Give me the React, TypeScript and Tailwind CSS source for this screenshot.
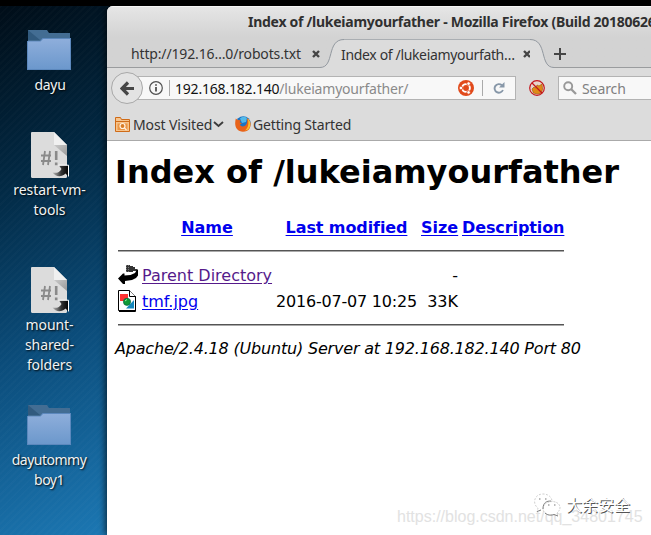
import React from "react";

const UI = "font-['Noto_Sans','Open_Sans',sans-serif]";

function Folder() {
  return (
    <svg width="44" height="40" viewBox="0 0 44 40" className="block shrink-0">
      <defs>
        <linearGradient id="folder" x1="0" y1="0" x2="0" y2="1">
          <stop offset="0" stopColor="#8eaedb" />
          <stop offset="1" stopColor="#6c98cc" />
        </linearGradient>
      </defs>
      <path d="M1 0h19l2 3h21v12H1z" fill="#436d93" />
      <path d="M1 0l12 10H1z" fill="#315a7e" />
      <path d="M0 11h13l2.500-3H44v32H0z" fill="#5c88bd" />
      <path d="M1 11.500h12.500l2.500-2.500H43v30H1z" fill="url(#folder)" />
    </svg>
  );
}

function Script() {
  return (
    <svg width="38" height="46" viewBox="0 0 38 46" className="ml-px block shrink-0">
      <defs>
        <linearGradient id="shade" x1="0" y1="0" x2="1" y2="1">
          <stop offset="0" stopColor="#c9c9c9" />
          <stop offset="1" stopColor="#999" />
        </linearGradient>
        <linearGradient id="link" x1="0" y1="0" x2="1" y2="0">
          <stop offset="0" stopColor="#bbb" />
          <stop offset=".55" stopColor="#333" />
          <stop offset="1" stopColor="#000" />
        </linearGradient>
      </defs>
      <path d="M1 0h22l13 13v31.500q0 1.500-1.500 1.500H1.500Q0 46 0 44.500V1q0-1 1-1z" fill="#dcdcdc" />
      <path d="M23 13h13v11z" fill="url(#shade)" />
      <path d="M23 0l13 13H23z" fill="#f0f0f0" />
      <path d="M14 19l-2 14M19 19l-2 14M10 23.500h10M10 29h10" stroke="#8a8a8a" strokeWidth="1.800" fill="none" />
      <path d="M25.200 19v9M25.200 30.500v2.800" stroke="#8a8a8a" strokeWidth="2.600" />
      <path d="M28 33.500h9.500v11l-3-3c-4 4-10 3.500-13-1 4 1 7 0 9-3.500z" fill="url(#link)" />
      <path d="M27.500 33.200h10v11.300" stroke="#fff" strokeWidth="1" fill="none" />
    </svg>
  );
}

function DesktopItem({ icon, lines, className, labelClass }: { icon: React.ReactNode; lines: string[]; className: string; labelClass: string }) {
  return (
    <div className={"flex w-[98px] flex-col items-center " + className}>
      {icon}
      <div className={"text-center text-[14px] leading-5 whitespace-nowrap text-[#f0f3f4] [text-shadow:1px_1px_2px_#000] " + labelClass}>
        {lines.map((l) => (
          <div key={l}>{l}</div>
        ))}
      </div>
    </div>
  );
}

function Close() {
  return (
    <svg width="8" height="8" viewBox="0 0 8 8" className="block shrink-0">
      <path d="M1 1l6 6M7 1L1 7" stroke="#454545" strokeWidth="2.400" />
    </svg>
  );
}

function Tabs() {
  return (
    <div className="flex h-[29px] text-[14px] text-[#333]">
      <div className="flex w-[213px] items-center border-b border-[#9a9c9e] pt-px pl-6">
        <span className="w-[171px] tracking-[-0.15px] whitespace-nowrap">http://192.16…0/robots.txt</span>
        <span className="ml-[11px]"><Close /></span>
      </div>
      <svg width="24" height="29" viewBox="0 0 24 29" className="block shrink-0">
        <path d="M0 28.500C15 28.500 6 .5 24 .5V29H0z" fill="#dcdcdc" />
        <path d="M0 28.500C15 28.500 6 .5 24 .5" stroke="#92989f" fill="none" />
      </svg>
      <div className="flex w-[186px] items-center border-t border-[#aaaeb2] bg-[#dcdcdc]">
        <span className="-ml-[3px] w-[174px] shrink-0 tracking-[-0.34px] whitespace-nowrap">Index of /lukeiamyourfath…</span>
        <span className="ml-[8px]"><Close /></span>
      </div>
      <svg width="24" height="29" viewBox="0 0 24 29" className="block shrink-0">
        <path d="M24 28.500C9 28.500 18 .5 0 .5V29H24z" fill="#dcdcdc" />
        <path d="M24 28.500C9 28.500 18 .5 0 .5" stroke="#92989f" fill="none" />
      </svg>
      <div className="flex flex-1 items-center border-b border-[#9a9c9e] pt-px">
        <svg width="12" height="12" viewBox="0 0 12 12" className="block">
          <path d="M6 0v12M0 6h12" stroke="#454545" strokeWidth="2" />
        </svg>
      </div>
    </div>
  );
}

function NavBar() {
  return (
    <div className="flex h-[39px] items-center pt-px pl-1 text-[14px]">
      <div className="z-10 flex size-8 shrink-0 items-center justify-center rounded-full border border-[#a8a8a8] bg-[#e3e3e3]">
        <svg width="15" height="15" viewBox="0 0 15 15">
          <path d="M8 1.500l-6 6 6 6M2.500 7.500H14" stroke="#474747" strokeWidth="3.200" fill="none" />
        </svg>
      </div>
      <div className="-ml-3 flex h-6 w-[385px] shrink-0 items-center border border-[#b3b3b3] bg-[#f8f8f8] pl-[17px]">
        <svg width="14" height="14" viewBox="0 0 14 14" className="block shrink-0">
          <circle cx="7" cy="7" r="6.300" stroke="#505050" strokeWidth="1.200" fill="none" />
          <path d="M7 6v4.500M7 3.200v1.600" stroke="#505050" strokeWidth="1.800" />
        </svg>
        <span className="ml-1.5 h-4 w-px bg-[#aaa]" />
        <span className="ml-[5px] w-[283px] tracking-[-0.2px] whitespace-nowrap text-[#8a8a8a]">
          <span className="text-[#111]">192.168.182.140</span>/lukeiamyourfather/
        </span>
        <svg width="16" height="16" viewBox="0 0 16 16" className="block shrink-0">
          <circle cx="8" cy="8" r="8" fill="#e14a1b" />
          <circle cx="8" cy="8" r="3.900" stroke="#fff" strokeWidth="1.900" fill="none" />
          <g fill="#fff" stroke="#e14a1b" strokeWidth=".8">
            <circle cx="2.900" cy="8" r="1.800" />
            <circle cx="10.600" cy="3.600" r="1.800" />
            <circle cx="10.600" cy="12.400" r="1.800" />
          </g>
        </svg>
        <span className="ml-2 h-4 w-px bg-[#aaa]" />
        <svg width="12" height="12" viewBox="0 0 12 12" className="ml-2.5 block shrink-0">
          <path d="M8.800 3.200A4.300 4.300 0 1 0 9.900 8" stroke="#8797a8" strokeWidth="1.900" fill="none" />
          <path d="M11.500 0v5.500H6z" fill="#8797a8" />
        </svg>
      </div>
      <svg width="16" height="16" viewBox="0 0 16 16" className="ml-[13px] block shrink-0">
        <circle cx="8" cy="8" r="7.300" fill="#e8d5cc" />
        <path d="M3 9l2-2 2 1 1-3 2 1 3-2 .5 5-1 4-4 1-4-1z" fill="#e08a16" stroke="#a75c10" strokeWidth=".7" />
        <circle cx="8" cy="8" r="7.300" stroke="#c4161c" strokeWidth="1.200" fill="none" />
        <path d="M3 3l10 10" stroke="#c4161c" strokeWidth="1.200" />
      </svg>
      <div className="ml-[13px] flex h-6 flex-1 items-center border border-r-0 border-[#b3b3b3] bg-[#f8f8f8] pl-1">
        <svg width="14" height="14" viewBox="0 0 14 14" className="block">
          <circle cx="5.200" cy="5.200" r="4" stroke="#999" strokeWidth="1.900" fill="none" />
          <path d="M8 8l5 5" stroke="#999" strokeWidth="2.300" />
        </svg>
        <span className="ml-[5px] tracking-[-0.1px] text-[#808080]">Search</span>
      </div>
    </div>
  );
}

function Bookmarks() {
  return (
    <div className="flex h-[34px] items-center border-b border-[#aaa] pt-px pl-2 text-[14px] text-[#333]">
      <svg width="15" height="15" viewBox="0 0 15 15" className="block shrink-0">
        <path d="M.5 14.500V.5h5l1 2h8v12z" fill="#f6c48d" stroke="#cf6b18" />
        <path d="M1 4.500h13" stroke="#cf6b18" />
        <path d="M2.500 13V6.500h10V13z" fill="#ea9748" />
        <circle cx="7.500" cy="9" r="2.500" stroke="#fff3e4" strokeWidth="1.200" fill="#d97c25" />
        <path d="M9.500 11l2 2" stroke="#fff3e4" strokeWidth="1.200" />
      </svg>
      <span className="ml-[3px] w-20 tracking-[-0.1px] whitespace-nowrap">Most Visited</span>
      <svg width="11" height="7" viewBox="0 0 11 7" className="block shrink-0">
        <path d="M1 1l4.500 4L10 1" stroke="#3d3d3d" strokeWidth="1.900" fill="none" />
      </svg>
      <svg width="16" height="16" viewBox="0 0 16 16" className="ml-[11px] block shrink-0">
        <circle cx="8.300" cy="7.500" r="7.300" fill="#1b74c4" />
        <path d="M5 2.500Q8-.5 12 2l-1 4-4 1z" fill="#52b9ea" />
        <path d="M.8 2.500l2 1.500 3 .2-1.200 2 2.300 1.300-2 1c.8 2.500 4.500 2.500 6 .5 1.600-2 1.600-5 .8-7C16 4 16.500 9 14.600 12.500 12 16.500 5 17 2 13-.4 10 0 6 .8 2.500z" fill="#e8631a" />
        <path d="M12.500 2.500C16 5 16 9.500 14 12.500c-1 1-2.500 2-4 2 3-2.500 4.500-7 2.500-12z" fill="#fbc02d" />
      </svg>
      <span className="ml-[2px] tracking-[-0.17px] whitespace-nowrap">Getting Started</span>
    </div>
  );
}

function BackIcon() {
  return (
    <svg width="20" height="22" viewBox="0 0 20 22" className="block">
      <path d="M8 1h4v1h3v1h2v2h2v2h-3l-2 1H8z" fill="#333" shapeRendering="crispEdges" />
      <path d="M8.500 1v7M10.500 1v7" stroke="#777" strokeDasharray="1 1" />
      <path d="M20 5.500v6l-2 2.500-4 2-7 1 0 3H5l-5-5.500 5-5h1.500v2l6-.5 4.500-2 2-3.500z" fill="#000" />
    </svg>
  );
}

function ImageIcon() {
  return (
    <svg width="20" height="22" viewBox="0 0 20 22" className="block">
      <path d="M.5 .5h11l6 6v14H.5z" fill="#fff" stroke="#000" />
      <path d="M17.500 6v15.500H1" stroke="#000" fill="none" />
      <path d="M11.500 .5v6h6" fill="#fff" stroke="#000" />
      <path d="M2 4h8v7H2z" fill="#f33" />
      <path d="M16 10v8.500H8z" fill="#1588bd" />
      <circle cx="9" cy="11.800" r="3.600" fill="#109a36" stroke="#064" strokeWidth=".7" />
      <path d="M7 11l2-1.500" stroke="#9df0a8" />
    </svg>
  );
}

function Rule() {
  return (
    <tr>
      <td colSpan={5} className="p-px">
        <div className="my-2 h-0.5 border-t border-b border-t-[#555] border-b-[#aaa]" />
      </td>
    </tr>
  );
}

const LINK = "text-[#0000ee] underline underline-offset-2";
const CELL = "px-px pt-0.5 pb-0";

function Page() {
  return (
    <div className="flex-1 bg-white px-2 pt-3 font-['DejaVu_Sans',sans-serif] text-[16px] leading-[22px] text-black">
      <h1 className="mb-[22px] text-[32px] leading-[38px] font-bold whitespace-nowrap">Index of /lukeiamyourfather</h1>
      <table className="w-[452px] table-fixed border-separate border-spacing-0.5 whitespace-nowrap">
        <colgroup>
          <col className="w-[22px]" />
          <col className="w-[132px]" />
          <col className="w-[143px]" />
          <col className="w-[39px]" />
          <col className="w-[104px]" />
        </colgroup>
        <tbody>
          <tr>
            <th className="h-6 p-px" />
            <th className={CELL}><a className={LINK}>Name</a></th>
            <th className={CELL}><a className={LINK + " tracking-[-0.1px]"}>Last modified</a></th>
            <th className={CELL}><a className={LINK}>Size</a></th>
            <th className={CELL}><a className={LINK + " tracking-[-0.1px]"}>Description</a></th>
          </tr>
          <Rule />
          <tr>
            <td className="h-6 p-px"><BackIcon /></td>
            <td className={CELL}><a className="text-[#551a8b] underline underline-offset-2">Parent Directory</a></td>
            <td className={CELL} />
            <td className={CELL + " text-right"}>-</td>
            <td className={CELL} />
          </tr>
          <tr>
            <td className="h-6 p-px"><ImageIcon /></td>
            <td className={CELL}><a className={LINK}>tmf.jpg</a></td>
            <td className={CELL + " tracking-[-0.2px]"}>2016-07-07 10:25</td>
            <td className={CELL + " text-right"}>33K</td>
            <td className={CELL} />
          </tr>
          <Rule />
        </tbody>
      </table>
      <address className="mt-px tracking-[-0.185px] whitespace-nowrap italic">Apache/2.4.18 (Ubuntu) Server at 192.168.182.140 Port 80</address>
    </div>
  );
}

function Watermark() {
  return (
    <div className="absolute top-[492px] left-[397px] h-9 w-[254px]">
      <span className="absolute top-[15px] left-0 font-['Liberation_Sans',sans-serif] text-[16px] leading-5 whitespace-nowrap text-[#e2e2e2]">
        https://blog.csdn.net/qq_34801745
      </span>
      <svg width="28" height="24" viewBox="0 0 28 24" className="absolute top-[1px] left-[136px]">
        <path d="M8 17l-4 2 1-4C-1 11 1 1 10 1c6 0 9 4 9 7" fill="#fff" stroke="#bbb" strokeWidth=".7" strokeDasharray="2 1.500" />
        <path d="M24 20l1 3-4-1.500c-7 2-11-2-11-6C10 7 26 6 27 14c0 3-1 4-3 6z" fill="#fff" stroke="#bbb" strokeWidth=".7" strokeDasharray="2 1" />
        <path d="M10 16c0-7 4-8 8-8M12 20c3 2.500 6 2.500 9 1.500l4 1.500M4 18.500l4-1.500" fill="none" stroke="#777" strokeWidth=".9" />
        <path d="M6 6h1.500M12 6h1.500M15 12h1.500M21 12h1.500" stroke="#777" strokeWidth="1.200" />
      </svg>
      <span className="absolute top-0 left-[169px] font-['Noto_Sans_CJK_SC',sans-serif] text-[16px] leading-6 whitespace-nowrap text-white [text-shadow:1px_1px_0_#555]">
        大余安全
      </span>
    </div>
  );
}

export default function App() {
  return (
    <div className={"relative flex h-[535px] w-[651px] flex-col overflow-hidden bg-black pt-1.5 " + UI}>
      <div className="flex min-h-0 flex-1 bg-[repeating-linear-gradient(135deg,#ffffff04_0px,#ffffff04_2px,transparent_2px,transparent_5px),linear-gradient(157deg,#000d18_0%,#022a45_32%,#0b4c7a_62%,#1c78b4_100%)] bg-[length:115px_529px] bg-no-repeat">
        <div className="w-[107px] shrink-0">
          <DesktopItem className="pt-6" labelClass="mt-[5px] pl-0.5 tracking-[-0.3px]" icon={<Folder />} lines={["dayu"]} />
          <DesktopItem className="pt-[37px]" labelClass="mt-[2px] pl-px tracking-[-0.05px]" icon={<Script />} lines={["restart-vm-", "tools"]} />
          <DesktopItem className="pt-[47px]" labelClass="mt-[2px] pl-px tracking-[-0.1px]" icon={<Script />} lines={["mount-", "shared-", "folders"]} />
          <DesktopItem className="pt-[30px]" labelClass="mt-[5px] tracking-[-0.5px]" icon={<Folder />} lines={["dayutommy", "boy1"]} />
        </div>
        <div className="flex w-[544px] flex-col overflow-hidden rounded-tl-[6px] bg-[#dcdcdc] shadow-[-2px_0_6px_#0009]">
          <div className="bg-linear-to-b from-[#e6e6e6] to-[#d3d3d3] to-50%">
            <div className="h-[33px] overflow-hidden border-t border-white/60 pl-[141px] text-[14px] leading-[30px] font-bold tracking-[-0.27px] whitespace-nowrap text-[#303030]">
              Index of /lukeiamyourfather - Mozilla Firefox (Build 20180626
            </div>
            <Tabs />
          </div>
          <NavBar />
          <Bookmarks />
          <Page />
        </div>
      </div>
      <Watermark />
    </div>
  );
}
